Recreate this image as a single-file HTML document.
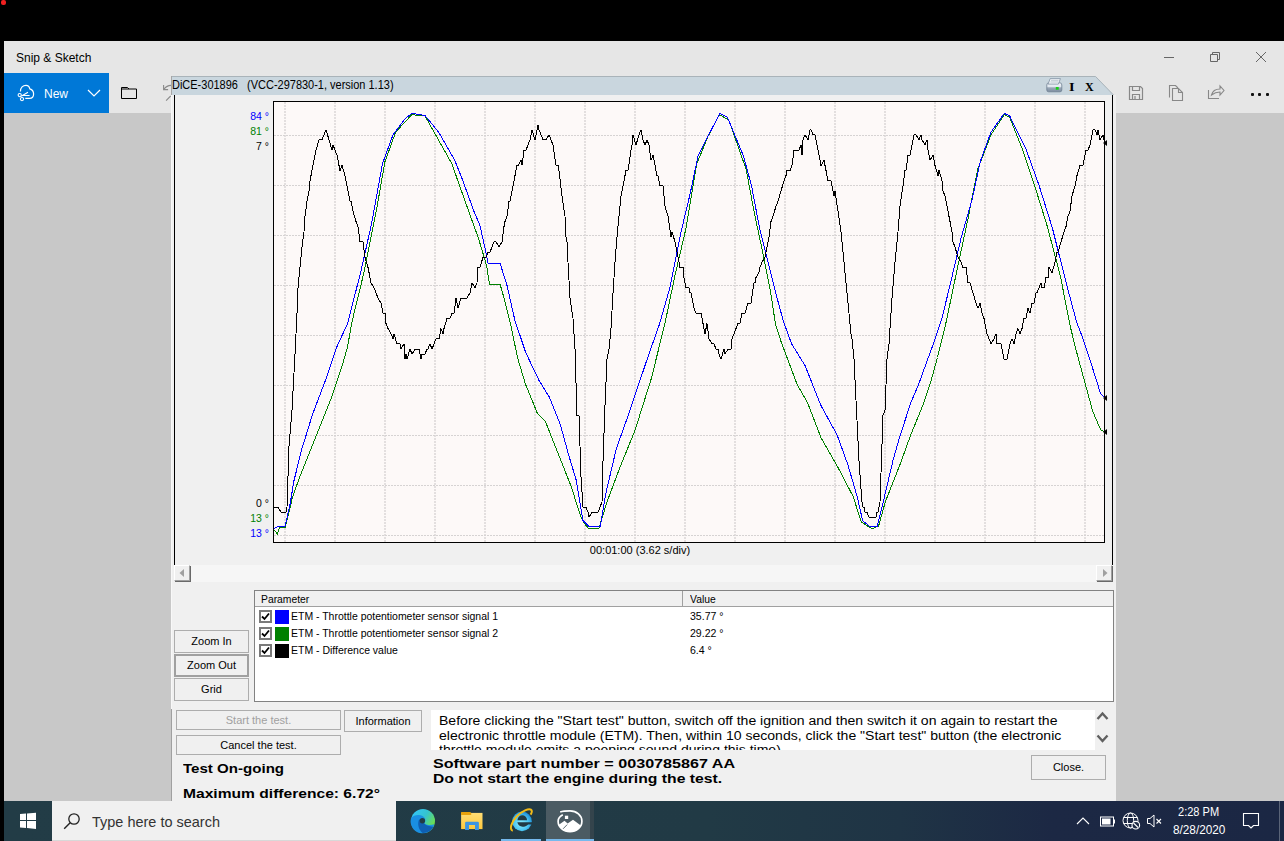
<!DOCTYPE html>
<html><head><meta charset="utf-8">
<style>
*{margin:0;padding:0;box-sizing:border-box}
html,body{width:1284px;height:841px;overflow:hidden;background:#000;font-family:"Liberation Sans",sans-serif}
.a{position:absolute}
.t{position:absolute;white-space:nowrap;line-height:1}
.btn{position:absolute;background:#f0f0f0;border:1px solid #adadad;font-size:11px;color:#000;text-align:center;white-space:nowrap}
</style></head><body>
<!-- red blob -->
<div class="a" style="left:1px;top:0;width:5px;height:5px;background:#f02020;border-radius:2px"></div>

<!-- Snip & Sketch window -->
<div class="a" style="left:4px;top:41px;width:1280px;height:72px;background:#e6e6e6"></div>
<div class="a" style="left:4px;top:113px;width:1280px;height:688px;background:#c8c8c8"></div>
<div class="t" style="left:16px;top:52px;font-size:12px;color:#000">Snip &amp; Sketch</div>
<!-- New button -->
<div class="a" style="left:4px;top:73px;width:105px;height:40px;background:#0078d7"></div>
<svg class="a" style="left:10px;top:78px" width="30" height="30" viewBox="0 0 30 30">
  <path d="M10.4 13.6 C10.4 9.6 13 7.3 16 7.3 C18 7.3 19.4 8.6 19.8 10.9 C22 11.6 23.6 13.5 23.6 16 C23.6 18.6 21.8 20.4 19.5 20.4 H15.3" fill="none" stroke="#fff" stroke-width="1.2"/>
  <circle cx="9.7" cy="17.1" r="1.6" fill="none" stroke="#fff" stroke-width="1.1"/>
  <circle cx="12" cy="21.1" r="1.6" fill="none" stroke="#fff" stroke-width="1.1"/>
  <path d="M11.2 18.2 L18 14.3 M12.3 17.5 H19.6" fill="none" stroke="#fff" stroke-width="1.1"/>
</svg>
<div class="t" style="left:44px;top:88px;font-size:12px;color:#fff">New</div>
<svg class="a" style="left:87px;top:89px" width="14" height="8" viewBox="0 0 14 8"><path d="M1 1 L7 7 L13 1" fill="none" stroke="#fff" stroke-width="1.2"/></svg>
<svg class="a" style="left:120px;top:86px" width="18" height="14" viewBox="0 0 18 14"><path d="M1.5 1.5 H7.5 L9 3 H16.5 V12.5 H1.5 Z M1.5 3 H9" fill="none" stroke="#000" stroke-width="1"/></svg>
<!-- small arrows near DiCE -->
<svg class="a" style="left:155px;top:76px" width="16" height="30" viewBox="0 0 16 30"><path d="M8.6 9 V13.6 H13.1 M8.9 13.3 C10.6 11 12.8 9.4 16 9.4 M15.7 20 L11.1 24.6" fill="none" stroke="#8a8a8a" stroke-width="1.1"/></svg>
<!-- window controls -->
<div class="a" style="left:1164px;top:57px;width:10px;height:1px;background:#666"></div>
<svg class="a" style="left:1209px;top:51px" width="12" height="12" viewBox="0 0 12 12"><path d="M1.5 3.5 H8.5 V10.5 H1.5 Z M3.5 3.5 V1.5 H10.5 V8.5 H8.5" fill="none" stroke="#666" stroke-width="1"/></svg>
<svg class="a" style="left:1255px;top:51px" width="12" height="12" viewBox="0 0 12 12"><path d="M1 1 L11 11 M11 1 L1 11" fill="none" stroke="#666" stroke-width="1"/></svg>
<!-- toolbar icons right -->
<svg class="a" style="left:1128px;top:85px" width="16" height="16" viewBox="0 0 16 16"><path d="M1.5 1.5 H12.5 L14.5 3.5 V14.5 H1.5 Z M4.5 1.5 V5.5 H11.5 V1.5 M4.5 14.5 V9.5 H11.5 V14.5 M7 11 V14" fill="none" stroke="#888" stroke-width="1.2"/></svg>
<svg class="a" style="left:1168px;top:84px" width="16" height="18" viewBox="0 0 16 18"><path d="M1.5 13.5 V1.5 H7.5 L10 4 M4.5 4.5 H10.5 L14.5 8.5 V16.5 H4.5 Z M10.5 4.5 V8.5 H14.5" fill="none" stroke="#888" stroke-width="1.1"/></svg>
<svg class="a" style="left:1207px;top:84px" width="18" height="16" viewBox="0 0 18 16"><path d="M1.5 6 V14.5 H12 M4.5 11 C5.5 7 9 5 13 5 V2 L17 6.5 L13 11 V8 C9.5 8 7 9 4.5 11 Z" fill="none" stroke="#888" stroke-width="1.1"/></svg>
<div class="a" style="left:1251px;top:93px;width:2.5px;height:2.5px;background:#111;border-radius:1px"></div>
<div class="a" style="left:1258px;top:93px;width:2.5px;height:2.5px;background:#111;border-radius:1px"></div>
<div class="a" style="left:1266px;top:93px;width:2.5px;height:2.5px;background:#111;border-radius:1px"></div>

<!-- DiCE window -->
<div class="a" style="left:171px;top:95px;width:945px;height:706px;background:#f0f0f0"></div>
<div class="a" style="left:171px;top:95px;width:1px;height:614px;background:#f8f8f8"></div>
<div class="a" style="left:171px;top:709px;width:1px;height:92px;background:#a0a0a0"></div>
<svg class="a" style="left:171px;top:76px" width="945" height="19" viewBox="0 0 945 19"><path d="M0 0 H924.5 L942.5 19 H0 Z" fill="#c9d6de"/><path d="M0 0.5 H924.5 L943 19.5" fill="none" stroke="#a9b3b9" stroke-width="1"/></svg>
<div class="a" style="left:171px;top:76px;width:1px;height:19px;background:#a6a6a6"></div>
<div class="t" style="left:172px;top:79px;font-size:12px;color:#000;transform-origin:0 0;transform:scaleX(0.915)">DiCE-301896&nbsp;&nbsp; (VCC-297830-1, version 1.13)</div>
<!-- printer I X -->
<svg class="a" style="left:1046px;top:78px" width="17" height="15" viewBox="0 0 17 15">
 <defs><linearGradient id="pg" x1="0" y1="0" x2="0" y2="1"><stop offset="0" stop-color="#f4f8fb"/><stop offset="0.45" stop-color="#dfe6ee"/><stop offset="0.55" stop-color="#9aa8b8"/><stop offset="1" stop-color="#7d8da0"/></linearGradient></defs>
 <path d="M0.8 7 Q0.8 4.8 3 4.8 H13.8 Q15.8 4.8 15.8 7 V12 Q15.8 13.8 14 13.8 H2.6 Q0.8 13.8 0.8 12 Z" fill="url(#pg)" stroke="#6f7f92" stroke-width="0.8"/>
 <path d="M4.2 0.6 H14.4 L12.4 6.1 H2.1 Z" fill="#f2f5f8" stroke="#8090a2" stroke-width="0.8"/>
 <path d="M5 2.3 H12.5 M4.4 4 H12" stroke="#a8b4c0" stroke-width="0.7"/>
 <rect x="9.8" y="9" width="2.9" height="2.7" fill="#18d018"/>
</svg>
<div class="t" style="left:1069px;top:81px;font-family:'Liberation Serif',serif;font-weight:bold;font-size:12.5px;color:#000;transform-origin:0 0;transform:scaleX(1.15)">I</div>
<div class="t" style="left:1085px;top:81px;font-family:'Liberation Serif',serif;font-weight:bold;font-size:12px;color:#000">X</div>

<!-- chart panel lines -->
<div class="a" style="left:174px;top:95px;width:1px;height:470px;background:#000"></div>
<div class="a" style="left:1112px;top:95px;width:1px;height:470px;background:#000"></div>

<svg class="a" style="left:0;top:0" width="1284" height="841" viewBox="0 0 1284 841">
<rect x="273.5" y="101.5" width="831" height="441" fill="#fdf9f8" stroke="#000" stroke-width="1"/>
<path d="M285 102V542M335 102V542M385 102V542M435 102V542M485 102V542M535 102V542M585 102V542M635 102V542M685 102V542M735 102V542M785 102V542M835 102V542M885 102V542M935 102V542M985 102V542M1035 102V542M1085 102V542" stroke="#e3dfdf" stroke-width="2" stroke-dasharray="2 1" fill="none" shape-rendering="crispEdges"/>
<path d="M274 135.5H1104M274 185.5H1104M274 235.5H1104M274 285.5H1104M274 335.5H1104M274 385.5H1104M274 435.5H1104M274 485.5H1104M274 535.5H1104" stroke="#d6d3d3" stroke-width="1" stroke-dasharray="2 1" fill="none" shape-rendering="crispEdges"/>
<polyline points="274.0,530.0 277.5,534.0 279.4,527.3 285.2,527.3 292.7,496.6 299.4,477.8 315.5,437.7 331.5,397.6 342.2,365.5 347.6,346.8 351.6,323.4 363.6,274.0 377.0,207.0 385.0,161.5 395.7,132.0 411.8,114.7 425.0,116.0 452.0,164.0 460.0,187.0 478.7,239.0 486.7,265.9 489.4,284.0 500.0,284.0 504.0,298.0 510.8,325.0 517.5,357.5 525.5,384.2 537.5,413.6 545.5,421.7 560.3,459.1 571.0,485.9 580.3,515.3 584.3,523.3 588.3,528.1 599.0,528.1 607.0,501.9 619.0,469.8 635.2,429.7 651.2,378.9 664.6,325.0 675.3,273.9 686.0,228.4 690.0,204.3 696.7,164.2 707.4,137.5 719.4,114.7 728.8,120.0 746.2,169.6 754.2,212.4 762.2,249.8 770.3,290.0 775.6,325.0 781.0,341.4 797.0,384.2 807.7,403.0 821.0,437.7 837.1,465.8 853.2,496.6 861.2,522.0 871.9,528.7 878.6,526.0 885.3,501.9 900.0,464.5 910.7,435.0 922.7,405.6 930.8,381.5 937.5,357.5 945.5,325.0 956.2,273.9 968.2,217.7 977.6,169.6 991.0,134.8 1004.3,114.7 1009.7,117.4 1023.0,150.8 1033.8,183.0 1047.1,225.7 1060.5,276.6 1069.9,325.0 1076.6,352.0 1084.6,381.5 1092.6,411.0 1100.6,429.7 1105.0,432.4" fill="none" stroke="#008000" stroke-width="1" shape-rendering="crispEdges"/>
<polyline points="274.0,528.6 278.0,526.5 285.2,526.0 290.0,504.6 294.0,480.5 302.0,448.4 312.8,413.6 326.0,378.9 336.9,346.8 347.6,323.4 361.0,271.0 371.7,223.0 382.4,164.0 393.0,134.8 405.0,118.7 411.8,113.4 425.0,115.5 438.5,132.0 454.6,160.0 462.6,180.0 473.3,209.7 480.0,225.7 485.4,249.8 488.0,263.2 500.0,263.2 506.8,284.6 514.8,320.0 525.5,352.0 538.9,380.2 549.6,397.6 560.3,424.3 568.3,453.8 576.3,480.5 583.0,520.6 588.3,526.0 600.4,526.0 605.7,493.9 616.4,448.4 629.8,411.0 645.9,362.8 659.2,325.0 670.0,287.3 680.6,233.8 690.0,194.3 698.0,156.2 708.7,134.8 720.0,113.4 727.5,117.4 743.5,156.2 751.5,185.6 759.6,228.4 767.6,260.5 775.6,292.6 783.6,322.0 791.7,344.0 805.0,365.5 821.0,405.6 837.1,435.0 847.8,464.5 857.2,496.6 862.6,520.6 869.2,526.0 877.3,526.0 882.6,504.6 893.3,459.1 900.0,436.0 910.7,403.0 918.7,384.2 925.4,365.5 934.8,340.0 941.5,320.0 949.5,287.3 961.5,236.4 972.2,199.0 980.3,161.5 991.0,132.1 1004.3,113.4 1009.7,116.0 1025.7,148.2 1039.1,185.6 1052.5,228.4 1065.9,282.0 1076.6,322.0 1082.0,336.0 1090.0,360.0 1100.6,393.6 1105.0,398.0" fill="none" stroke="#0000ff" stroke-width="1" shape-rendering="crispEdges"/>
<polyline points="274.0,507.1 276.0,507.1 278.0,507.1 281.0,512.2 282.0,512.2 283.0,512.2 284.0,512.2 286.0,512.2 287.0,507.1 289.0,445.9 292.0,410.2 295.0,354.1 297.0,313.3 298.0,287.8 301.0,257.2 302.0,247.0 304.0,231.7 305.0,216.4 307.0,201.1 309.0,190.9 310.0,180.7 313.0,165.4 316.0,150.1 319.0,139.9 322.0,139.9 324.0,134.8 326.0,129.7 329.0,139.9 332.0,150.1 333.0,145.0 335.0,150.1 337.0,155.2 340.0,170.5 342.0,165.4 345.0,175.6 348.0,190.9 350.0,201.1 351.0,201.1 353.0,211.3 356.0,221.5 358.0,226.6 360.0,241.9 363.0,241.9 365.0,257.2 368.0,267.4 369.0,272.5 371.0,282.7 374.0,287.8 376.0,292.9 378.0,298.0 381.0,303.1 383.0,313.3 385.0,313.3 386.0,323.5 388.0,328.6 391.0,333.7 393.0,338.8 394.0,333.7 397.0,343.9 400.0,343.9 401.0,349.0 404.0,343.9 405.0,359.2 406.0,354.1 407.0,359.2 410.0,349.0 412.0,354.1 415.0,349.0 418.0,349.0 419.0,349.0 421.0,359.2 422.0,354.1 424.0,354.1 425.0,354.1 427.0,349.0 428.0,349.0 430.0,343.9 432.0,349.0 434.0,343.9 436.0,338.8 439.0,338.8 441.0,328.6 443.0,333.7 444.0,328.6 447.0,318.4 450.0,318.4 452.0,313.3 454.0,313.3 456.0,298.0 458.0,308.2 461.0,298.0 463.0,298.0 464.0,298.0 465.0,298.0 467.0,298.0 470.0,292.9 472.0,282.7 475.0,287.8 477.0,282.7 478.0,267.4 480.0,267.4 483.0,257.2 485.0,257.2 486.0,257.2 488.0,252.1 490.0,252.1 492.0,247.0 494.0,241.9 496.0,241.9 499.0,247.0 502.0,241.9 504.0,226.6 505.0,221.5 507.0,216.4 509.0,201.1 510.0,201.1 512.0,190.9 515.0,175.6 516.0,170.5 517.0,165.4 518.0,165.4 521.0,160.3 522.0,165.4 524.0,150.1 526.0,150.1 528.0,145.0 530.0,139.9 532.0,129.7 535.0,139.9 538.0,124.6 539.0,129.7 541.0,134.8 543.0,139.9 546.0,139.9 549.0,134.8 551.0,139.9 553.0,145.0 556.0,165.4 558.0,165.4 559.0,170.5 562.0,196.0 565.0,216.4 566.0,236.8 567.0,241.9 568.0,262.3 570.0,298.0 573.0,318.4 575.0,349.0 577.0,415.3 579.0,415.3 581.0,476.5 582.0,491.8 583.0,507.1 585.0,507.1 586.0,507.1 588.0,512.2 589.0,517.3 592.0,512.2 593.0,512.2 595.0,512.2 598.0,512.2 600.0,507.1 602.0,502.0 603.0,461.2 605.0,405.1 607.0,359.2 609.0,349.0 611.0,328.6 613.0,292.9 615.0,262.3 617.0,236.8 618.0,226.6 621.0,196.0 624.0,180.7 626.0,170.5 628.0,170.5 631.0,150.1 632.0,145.0 633.0,134.8 636.0,145.0 639.0,134.8 641.0,129.7 643.0,139.9 645.0,145.0 647.0,139.9 649.0,145.0 651.0,160.3 653.0,155.2 655.0,165.4 657.0,175.6 658.0,175.6 660.0,185.8 663.0,185.8 665.0,206.2 668.0,216.4 671.0,236.8 672.0,231.7 675.0,241.9 677.0,252.1 678.0,257.2 680.0,267.4 682.0,267.4 683.0,267.4 684.0,277.6 686.0,287.8 689.0,287.8 690.0,292.9 691.0,292.9 694.0,308.2 696.0,313.3 698.0,313.3 701.0,313.3 702.0,318.4 703.0,323.5 705.0,333.7 707.0,323.5 709.0,338.8 712.0,343.9 714.0,343.9 716.0,349.0 718.0,349.0 719.0,354.1 721.0,359.2 724.0,349.0 725.0,354.1 728.0,349.0 731.0,349.0 732.0,338.8 734.0,333.7 736.0,328.6 738.0,323.5 740.0,323.5 742.0,313.3 745.0,313.3 748.0,303.1 751.0,303.1 754.0,282.7 755.0,282.7 756.0,277.6 759.0,272.5 760.0,267.4 762.0,262.3 765.0,257.2 767.0,247.0 769.0,236.8 771.0,221.5 773.0,216.4 776.0,206.2 778.0,201.1 781.0,190.9 784.0,180.7 786.0,175.6 787.0,170.5 790.0,170.5 792.0,165.4 794.0,150.1 796.0,150.1 799.0,150.1 801.0,145.0 802.0,155.2 803.0,139.9 805.0,134.8 808.0,139.9 810.0,129.7 811.0,129.7 813.0,134.8 815.0,134.8 818.0,150.1 821.0,165.4 824.0,160.3 826.0,170.5 828.0,180.7 831.0,180.7 834.0,196.0 835.0,190.9 838.0,211.3 841.0,231.7 844.0,262.3 846.0,282.7 848.0,303.1 851.0,333.7 852.0,338.8 854.0,359.2 855.0,379.6 857.0,420.4 859.0,461.2 862.0,502.0 863.0,507.1 864.0,507.1 865.0,512.2 867.0,512.2 869.0,517.3 872.0,517.3 874.0,517.3 876.0,517.3 877.0,512.2 878.0,512.2 880.0,502.0 883.0,415.3 885.0,410.2 887.0,359.2 889.0,343.9 892.0,298.0 895.0,262.3 898.0,231.7 900.0,206.2 903.0,185.8 905.0,170.5 906.0,170.5 908.0,155.2 910.0,155.2 912.0,145.0 914.0,134.8 916.0,134.8 919.0,139.9 921.0,134.8 922.0,139.9 925.0,145.0 927.0,139.9 928.0,150.1 930.0,160.3 933.0,155.2 935.0,165.4 938.0,175.6 939.0,170.5 942.0,180.7 943.0,190.9 945.0,196.0 948.0,211.3 950.0,221.5 952.0,231.7 953.0,241.9 955.0,247.0 958.0,257.2 961.0,262.3 963.0,267.4 965.0,267.4 966.0,267.4 968.0,282.7 969.0,282.7 970.0,282.7 973.0,292.9 976.0,303.1 978.0,308.2 980.0,303.1 982.0,313.3 984.0,318.4 987.0,333.7 989.0,338.8 991.0,343.9 994.0,338.8 996.0,333.7 997.0,343.9 999.0,343.9 1001.0,343.9 1004.0,359.2 1007.0,359.2 1008.0,354.1 1010.0,343.9 1012.0,338.8 1014.0,343.9 1016.0,333.7 1018.0,328.6 1020.0,333.7 1022.0,328.6 1023.0,323.5 1024.0,318.4 1026.0,318.4 1028.0,308.2 1030.0,313.3 1032.0,303.1 1034.0,303.1 1036.0,292.9 1037.0,292.9 1039.0,287.8 1041.0,282.7 1042.0,287.8 1044.0,287.8 1046.0,277.6 1048.0,277.6 1049.0,267.4 1052.0,272.5 1055.0,262.3 1057.0,252.1 1058.0,252.1 1061.0,241.9 1064.0,231.7 1066.0,226.6 1068.0,216.4 1070.0,211.3 1072.0,196.0 1075.0,185.8 1077.0,175.6 1080.0,165.4 1083.0,165.4 1086.0,150.1 1088.0,150.1 1090.0,145.0 1093.0,129.7 1095.0,129.7 1097.0,134.8 1098.0,129.7 1100.0,139.9 1103.0,134.8 1104.0,139.9" fill="none" stroke="#000" stroke-width="1" shape-rendering="crispEdges"/>
<path d="M1103 143 L1107 140 V146 Z" fill="#000"/>
<path d="M1103 398 L1107 395 V401 Z" fill="#000"/>
<path d="M1103 432 L1107 429 V435 Z" fill="#000"/>
</svg>

<!-- y labels -->
<div class="t" style="left:199px;width:70px;text-align:right;top:111px;font-size:10.5px;color:#0000ff">84 °</div>
<div class="t" style="left:199px;width:70px;text-align:right;top:126px;font-size:10.5px;color:#008000">81 °</div>
<div class="t" style="left:199px;width:70px;text-align:right;top:141px;font-size:10.5px;color:#000">7 °</div>
<div class="t" style="left:199px;width:70px;text-align:right;top:498px;font-size:10.5px;color:#000">0 °</div>
<div class="t" style="left:199px;width:70px;text-align:right;top:513px;font-size:10.5px;color:#008000">13 °</div>
<div class="t" style="left:199px;width:70px;text-align:right;top:528px;font-size:10.5px;color:#0000ff">13 °</div>
<div class="t" style="left:540px;width:200px;text-align:center;top:545px;font-size:11px;color:#000">00:01:00 (3.62 s/div)</div>

<!-- scrollbar -->
<div class="a" style="left:190px;top:565px;width:906px;height:17px;background:#f6f6f6"></div>
<div class="a" style="left:174px;top:565px;width:16px;height:16px;background:#f0f0f0;border-top:1px solid #fff;border-left:1px solid #fff;border-right:1px solid #a0a0a0;border-bottom:1px solid #a0a0a0;box-shadow:1px 1px 0 #696969"></div>
<svg class="a" style="left:178px;top:568px" width="8" height="10" viewBox="0 0 8 10"><path d="M6 1 V9 L1.5 5 Z" fill="#a0a0a0"/></svg>
<div class="a" style="left:1096px;top:565px;width:16px;height:16px;background:#f0f0f0;border-top:1px solid #fff;border-left:1px solid #fff;border-right:1px solid #a0a0a0;border-bottom:1px solid #a0a0a0;box-shadow:1px 1px 0 #696969"></div>
<svg class="a" style="left:1101px;top:568px" width="8" height="10" viewBox="0 0 8 10"><path d="M2 1 V9 L6.5 5 Z" fill="#a0a0a0"/></svg>

<!-- zoom buttons -->
<div class="btn" style="left:174px;top:630px;width:75px;height:23px;line-height:20px">Zoom In</div>
<div class="btn" style="left:174px;top:654px;width:75px;height:23px;line-height:19px;border:2px solid #a0a0a0">Zoom Out</div>
<div class="btn" style="left:174px;top:678px;width:75px;height:23px;line-height:20px">Grid</div>

<!-- table -->
<div class="a" style="left:254px;top:590px;width:860px;height:112px;background:#fff;border:1px solid #828282"></div>
<div class="a" style="left:255px;top:591px;width:858px;height:16px;background:#f0f0f0;border-bottom:1px solid #a0a0a0"></div>
<div class="a" style="left:682px;top:591px;width:1px;height:15px;background:#a0a0a0"></div>
<div class="t" style="left:261px;top:594px;font-size:11px;color:#000;transform-origin:0 0;transform:scaleX(0.94)">Parameter</div>
<div class="t" style="left:690px;top:594px;font-size:11px;color:#000;transform-origin:0 0;transform:scaleX(0.94)">Value</div>
<div class="a" style="left:259px;top:610px;width:13px;height:13px;border:2px solid #7a7a7a;background:#fff"></div>
<svg class="a" style="left:261px;top:612px" width="9" height="9" viewBox="0 0 9 9"><path d="M1 4.5 L3.5 7 L8 1.5" fill="none" stroke="#000" stroke-width="1.8"/></svg>
<div class="a" style="left:275px;top:610px;width:14px;height:14px;background:#0000ff"></div>
<div class="t" style="left:291px;top:611px;font-size:11px;color:#000;transform-origin:0 0;transform:scaleX(0.952)">ETM - Throttle potentiometer sensor signal 1</div>
<div class="t" style="left:690px;top:611px;font-size:11px;color:#000;transform-origin:0 0;transform:scaleX(0.96)">35.77 °</div>
<div class="a" style="left:259px;top:627px;width:13px;height:13px;border:2px solid #7a7a7a;background:#fff"></div>
<svg class="a" style="left:261px;top:629px" width="9" height="9" viewBox="0 0 9 9"><path d="M1 4.5 L3.5 7 L8 1.5" fill="none" stroke="#000" stroke-width="1.8"/></svg>
<div class="a" style="left:275px;top:627px;width:14px;height:14px;background:#008000"></div>
<div class="t" style="left:291px;top:628px;font-size:11px;color:#000;transform-origin:0 0;transform:scaleX(0.952)">ETM - Throttle potentiometer sensor signal 2</div>
<div class="t" style="left:690px;top:628px;font-size:11px;color:#000;transform-origin:0 0;transform:scaleX(0.96)">29.22 °</div>
<div class="a" style="left:259px;top:644px;width:13px;height:13px;border:2px solid #7a7a7a;background:#fff"></div>
<svg class="a" style="left:261px;top:646px" width="9" height="9" viewBox="0 0 9 9"><path d="M1 4.5 L3.5 7 L8 1.5" fill="none" stroke="#000" stroke-width="1.8"/></svg>
<div class="a" style="left:275px;top:644px;width:14px;height:14px;background:#000"></div>
<div class="t" style="left:291px;top:645px;font-size:11px;color:#000;transform-origin:0 0;transform:scaleX(0.952)">ETM - Difference value</div>
<div class="t" style="left:690px;top:645px;font-size:11px;color:#000;transform-origin:0 0;transform:scaleX(0.96)">6.4 °</div>

<!-- bottom controls -->
<div class="btn" style="left:176px;top:710px;width:165px;height:20px;line-height:18px;color:#a0a0a0">Start the test.</div>
<div class="btn" style="left:344px;top:710px;width:78px;height:22px;line-height:20px">Information</div>
<div class="btn" style="left:176px;top:735px;width:165px;height:20px;line-height:18px">Cancel the test.</div>
<div class="t" style="left:183px;top:762px;font-size:13px;font-weight:bold;color:#000;transform-origin:0 0;transform:scaleX(1.16)">Test On-going</div>
<div class="t" style="left:183px;top:787px;font-size:13px;font-weight:bold;color:#000;transform-origin:0 0;transform:scaleX(1.2)">Maximum difference: 6.72°</div>

<div class="a" style="left:431px;top:710px;width:664px;height:40px;background:#fff;overflow:hidden">
  <div style="position:absolute;left:8px;top:4px;font-size:12px;line-height:14.5px;color:#000;white-space:nowrap;transform-origin:0 0;transform:scaleX(1.17)">Before clicking the "Start test" button, switch off the ignition and then switch it on again to restart the<br>electronic throttle module (ETM). Then, within 10 seconds, click the "Start test" button (the electronic<br>throttle module emits a peeping sound during this time).</div>
</div>
<svg class="a" style="left:1096px;top:711px" width="13" height="34" viewBox="0 0 13 34"><path d="M1.5 8 L6.5 2.5 L11.5 8 M1.5 24.5 L6.5 30 L11.5 24.5" fill="none" stroke="#606060" stroke-width="2.4"/></svg>
<div class="t" style="left:433px;top:758px;font-size:12px;font-weight:bold;color:#000;transform-origin:0 0;transform:scaleX(1.345)">Software part number = 0030785867 AA</div>
<div class="t" style="left:433px;top:773px;font-size:12px;font-weight:bold;color:#000;transform-origin:0 0;transform:scaleX(1.31)">Do not start the engine during the test.</div>
<div class="btn" style="left:1031px;top:755px;width:75px;height:25px;line-height:23px">Close.</div>

<!-- taskbar -->
<div class="a" style="left:4px;top:801px;width:1280px;height:40px;background:linear-gradient(90deg,#223c46 0%,#213a45 55%,#1f3445 70%,#1c2844 82%,#1b2744 100%)"></div>
<svg class="a" style="left:12px;top:805px" width="32" height="32" viewBox="0 0 32 32"><path d="M8 9.1 L14 8.6 V15 H8 Z M15 8.5 L24 7.8 V15 H15 Z M8 16 H14 V22.9 L8 22.4 Z M15 16 H24 V24.1 L15 23.1 Z" fill="#fff"/></svg>
<div class="a" style="left:52px;top:801px;width:344px;height:40px;background:#f0f0f0;border-bottom:1px solid #d8d8d8"></div>
<svg class="a" style="left:63px;top:812px" width="18" height="18" viewBox="0 0 18 18"><circle cx="11" cy="7" r="5.2" fill="none" stroke="#222" stroke-width="1.3"/><path d="M7.2 10.8 L1.2 16.8" stroke="#222" stroke-width="1.4"/></svg>
<div class="t" style="left:92px;top:814px;font-size:15px;color:#333;transform-origin:0 0;transform:scaleX(0.965)">Type here to search</div>

<!-- edge -->
<svg class="a" style="left:406px;top:804px" width="34" height="34" viewBox="0 0 34 34">
 <defs><linearGradient id="eg" x1="0.1" y1="0.2" x2="0.9" y2="0.7"><stop offset="0" stop-color="#33c5f3"/><stop offset="0.5" stop-color="#35c3cf"/><stop offset="1" stop-color="#6ddf4c"/></linearGradient></defs>
 <circle cx="17" cy="16.9" r="12" fill="url(#eg)"/>
 <path d="M5 14.3 C6.8 11.6 10 10.9 12.6 11 C15.6 11.2 18.2 12.6 19 14.5 C19.6 16.2 19.2 18.5 18.4 19.6 C20.5 21.2 24.5 21.6 28.3 20.3 A12 12 0 0 1 5 14.3 Z" fill="#1a8fe2"/>
 <path d="M13.2 15.2 C11.3 18.8 12 25.2 16.6 28.9 A12 12 0 0 0 27.6 22.6 C24 22.8 20.5 22 18.4 19.6 Z" fill="#0f5fb3"/>
 <circle cx="16.4" cy="16.8" r="2.7" fill="#223a44"/>
</svg>
<!-- folder -->
<svg class="a" style="left:455px;top:804px" width="34" height="34" viewBox="0 0 34 34">
 <defs><linearGradient id="fg" x1="0" y1="0" x2="0" y2="1"><stop offset="0" stop-color="#ffdd75"/><stop offset="1" stop-color="#ffc93c"/></linearGradient></defs>
 <path d="M6.1 8.9 H27.5 V25.1 H6.1 Z" fill="url(#fg)"/>
 <path d="M6.1 7.9 H15.2 L16.2 9 V10.9 H6.1 Z" fill="#e8a20c"/>
 <path d="M10.1 19 Q10.1 17.8 11.3 17.8 H22.7 Q23.9 17.8 23.9 19 V25.9 H20 V21 H14 V25.9 H10.1 Z" fill="#3d95e2"/>
</svg>
<!-- IE -->
<svg class="a" style="left:504px;top:804px" width="34" height="34" viewBox="0 0 34 34">
 <defs><radialGradient id="ig" cx="0.45" cy="0.6" r="0.6"><stop offset="0" stop-color="#8ff0ff"/><stop offset="0.6" stop-color="#4cc6f2"/><stop offset="1" stop-color="#1e8fd8"/></radialGradient></defs>
 <circle cx="18" cy="17.4" r="9.8" fill="url(#ig)"/>
 <path d="M13.4 16.2 C13.8 12.8 16 11.3 18.3 11.3 C20.6 11.3 22.8 12.8 23.1 16.2 Z" fill="#223a44"/>
 <path d="M13.3 18.3 H28.5 V20.4 H24.2 C22.6 22 20.6 22.7 18.6 22.7 C15.9 22.7 13.9 21 13.3 18.3 Z" fill="#223a44"/>
 <path d="M8.8 26.8 C5.2 26 6.8 18.5 12.8 12.3 C18.3 6.8 24.8 4.2 26.9 5.6 C28.4 6.6 28 8.6 26.6 10.6" fill="none" stroke="#f2bb18" stroke-width="2"/>
</svg>
<div class="a" style="left:501px;top:839px;width:40px;height:2px;background:#76b9ed"></div>
<!-- active snip -->
<div class="a" style="left:546px;top:801px;width:44px;height:40px;background:#4b5b63"></div>
<div class="a" style="left:590px;top:801px;width:4px;height:40px;background:#34444c"></div>
<div class="a" style="left:546px;top:839px;width:48px;height:2px;background:#76b9ed"></div>
<svg class="a" style="left:553px;top:804px" width="34" height="34" viewBox="0 0 34 34">
 <path d="M7.2 8 C9.5 7.2 12.5 6.9 17 6.9 C23.6 6.9 28.9 11.5 28.9 17.2 C28.9 23 23.6 27.7 17 27.7 C10.4 27.7 5.1 23 5.1 17.2 C5.1 14.6 6.6 12.4 9.8 10.7" fill="none" stroke="#fff" stroke-width="1.7"/>
 <rect x="11.9" y="11.7" width="3.3" height="3.3" fill="#fff"/>
 <path d="M5.6 21 L11.5 16.8 L14.6 19.6 L20 15.8 L27.8 21.6 C26.2 25.6 22 27.7 17 27.7 C11.5 27.7 7.2 25 5.6 21 Z" fill="#fff"/>
 <path d="M14.2 20.6 L10.1 24.8" stroke="#4b5b63" stroke-width="0.9"/>
</svg>

<!-- tray -->
<svg class="a" style="left:1076px;top:816px" width="14" height="9" viewBox="0 0 14 9"><path d="M1 8 L7 2 L13 8" fill="none" stroke="#fff" stroke-width="1.1"/></svg>
<svg class="a" style="left:1099px;top:816px" width="17" height="11" viewBox="0 0 17 11"><rect x="1.5" y="1" width="13" height="9" fill="none" stroke="#fff" stroke-width="1"/><rect x="3" y="2.5" width="8.5" height="6" fill="#fff"/><rect x="14.5" y="3.5" width="1.5" height="4" fill="#fff"/></svg>
<svg class="a" style="left:1122px;top:812px" width="19" height="18" viewBox="0 0 19 18">
 <circle cx="8.5" cy="8.5" r="7.5" fill="none" stroke="#fff" stroke-width="1"/>
 <ellipse cx="8.5" cy="8.5" rx="3.2" ry="7.5" fill="none" stroke="#fff" stroke-width="1"/>
 <path d="M1.5 5.5 H15.5 M1.5 11.5 H12" stroke="#fff" stroke-width="1"/>
 <circle cx="13.8" cy="13.2" r="3.8" fill="#1c2944" stroke="#fff" stroke-width="1.1"/>
 <path d="M11.5 11 L16.1 15.5" stroke="#fff" stroke-width="1.1"/>
</svg>
<svg class="a" style="left:1146px;top:814px" width="17" height="14" viewBox="0 0 17 14"><path d="M1.5 4.5 H4 L8 1 V13 L4 9.5 H1.5 Z" fill="none" stroke="#fff" stroke-width="1"/><path d="M10.5 5 L15 9.5 M15 5 L10.5 9.5" stroke="#fff" stroke-width="1.1"/></svg>
<div class="t" style="left:1178px;top:806px;font-size:12px;color:#fff;transform-origin:0 0;transform:scaleX(0.92)">2:28 PM</div>
<div class="t" style="left:1173px;top:823.5px;font-size:12px;color:#fff;transform-origin:0 0;transform:scaleX(0.98)">8/28/2020</div>
<svg class="a" style="left:1242px;top:812px" width="18" height="18" viewBox="0 0 18 18"><path d="M1.5 1.5 H16.5 V13.5 H11.5 L9 16 L6.5 13.5 H1.5 Z" fill="none" stroke="#fff" stroke-width="1.1"/></svg>
<div class="a" style="left:1279px;top:801px;width:1px;height:40px;background:#5a6478"></div>
</body></html>
